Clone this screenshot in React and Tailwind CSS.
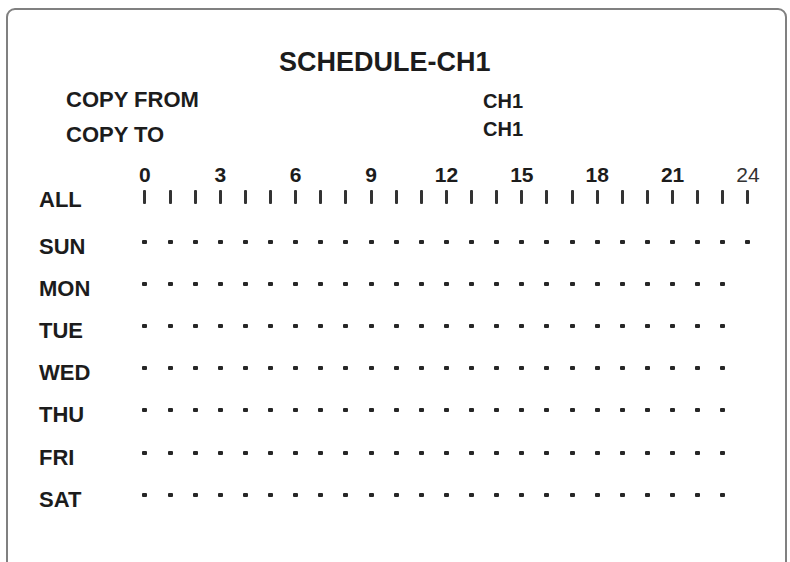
import React from "react";

const DAYS = ["SUN", "MON", "TUE", "WED", "THU", "FRI", "SAT"];
const SLOTS = Array.from({ length: 25 }, (_, i) => i);

// Each hour slot is one column; SUN shows the 24:00 mark, other days stop at 23
const dotsFor = (day) => (day === "SUN" ? 25 : 24);

const Slot = ({ children, className = "" }) => (
  <div className={`w-[25.125px] shrink-0 flex justify-center ${className}`}>
    {children}
  </div>
);

const ScheduleRow = ({ label, children, className = "" }) => (
  <div className={`flex items-center ${className}`}>
    <div className="w-[124.4px] shrink-0 pl-[31px] text-[22px] leading-none font-bold">
      {label}
    </div>
    <div className="flex">{children}</div>
  </div>
);

export default function App() {
  return (
    <div
      className="w-[790px] h-[562px] overflow-hidden bg-white pl-[6px] pr-[3px] pt-[8px] text-[#1c1c1c]"
      style={{ fontFamily: '"Liberation Sans", Arial, sans-serif' }}
    >
      <div className="h-[590px] border-2 border-[#808080] rounded-[9px] pt-[39px]">
        <h1 className="ml-[271px] text-[27px] leading-none font-bold">SCHEDULE-CH1</h1>

        {/* copy source / target */}
        <div className="flex mt-[13px]">
          <div className="pl-[58px] w-[475px] text-[22px] leading-none font-bold">
            <div>COPY FROM</div>
            <div className="mt-[12.5px]">COPY TO</div>
          </div>
          <div className="pt-[1.5px] text-[20px] leading-none font-bold">
            <div>CH1</div>
            <div className="mt-[8.5px]">CH1</div>
          </div>
        </div>

        {/* hour scale */}
        <div className="flex mt-[18px] pl-[124.4px]">
          {SLOTS.map((i) => (
            <Slot key={i}>
              {i % 3 === 0 && (
                <span
                  className={`whitespace-nowrap text-[21px] leading-none ${
                    i === 24 ? "font-normal text-[#333]" : "font-bold"
                  }`}
                >
                  {i}
                </span>
              )}
            </Slot>
          ))}
        </div>

        <ScheduleRow label="ALL" className="h-[26px] mt-[2px]">
          {SLOTS.map((i) => (
            <Slot key={i} className="pb-[5px]">
              <div className="w-[3px] h-[14px] bg-[#333] rounded-[1px]" />
            </Slot>
          ))}
        </ScheduleRow>

        <div className="mt-[13px]">
          {DAYS.map((day) => (
            <ScheduleRow key={day} label={day} className="h-[42.2px]">
              {SLOTS.slice(0, dotsFor(day)).map((i) => (
                <Slot key={i} className="pb-[10px]">
                  <div className="w-[5px] h-[4px] bg-[#262626] rounded-[1px]" />
                </Slot>
              ))}
            </ScheduleRow>
          ))}
        </div>
      </div>
    </div>
  );
}
